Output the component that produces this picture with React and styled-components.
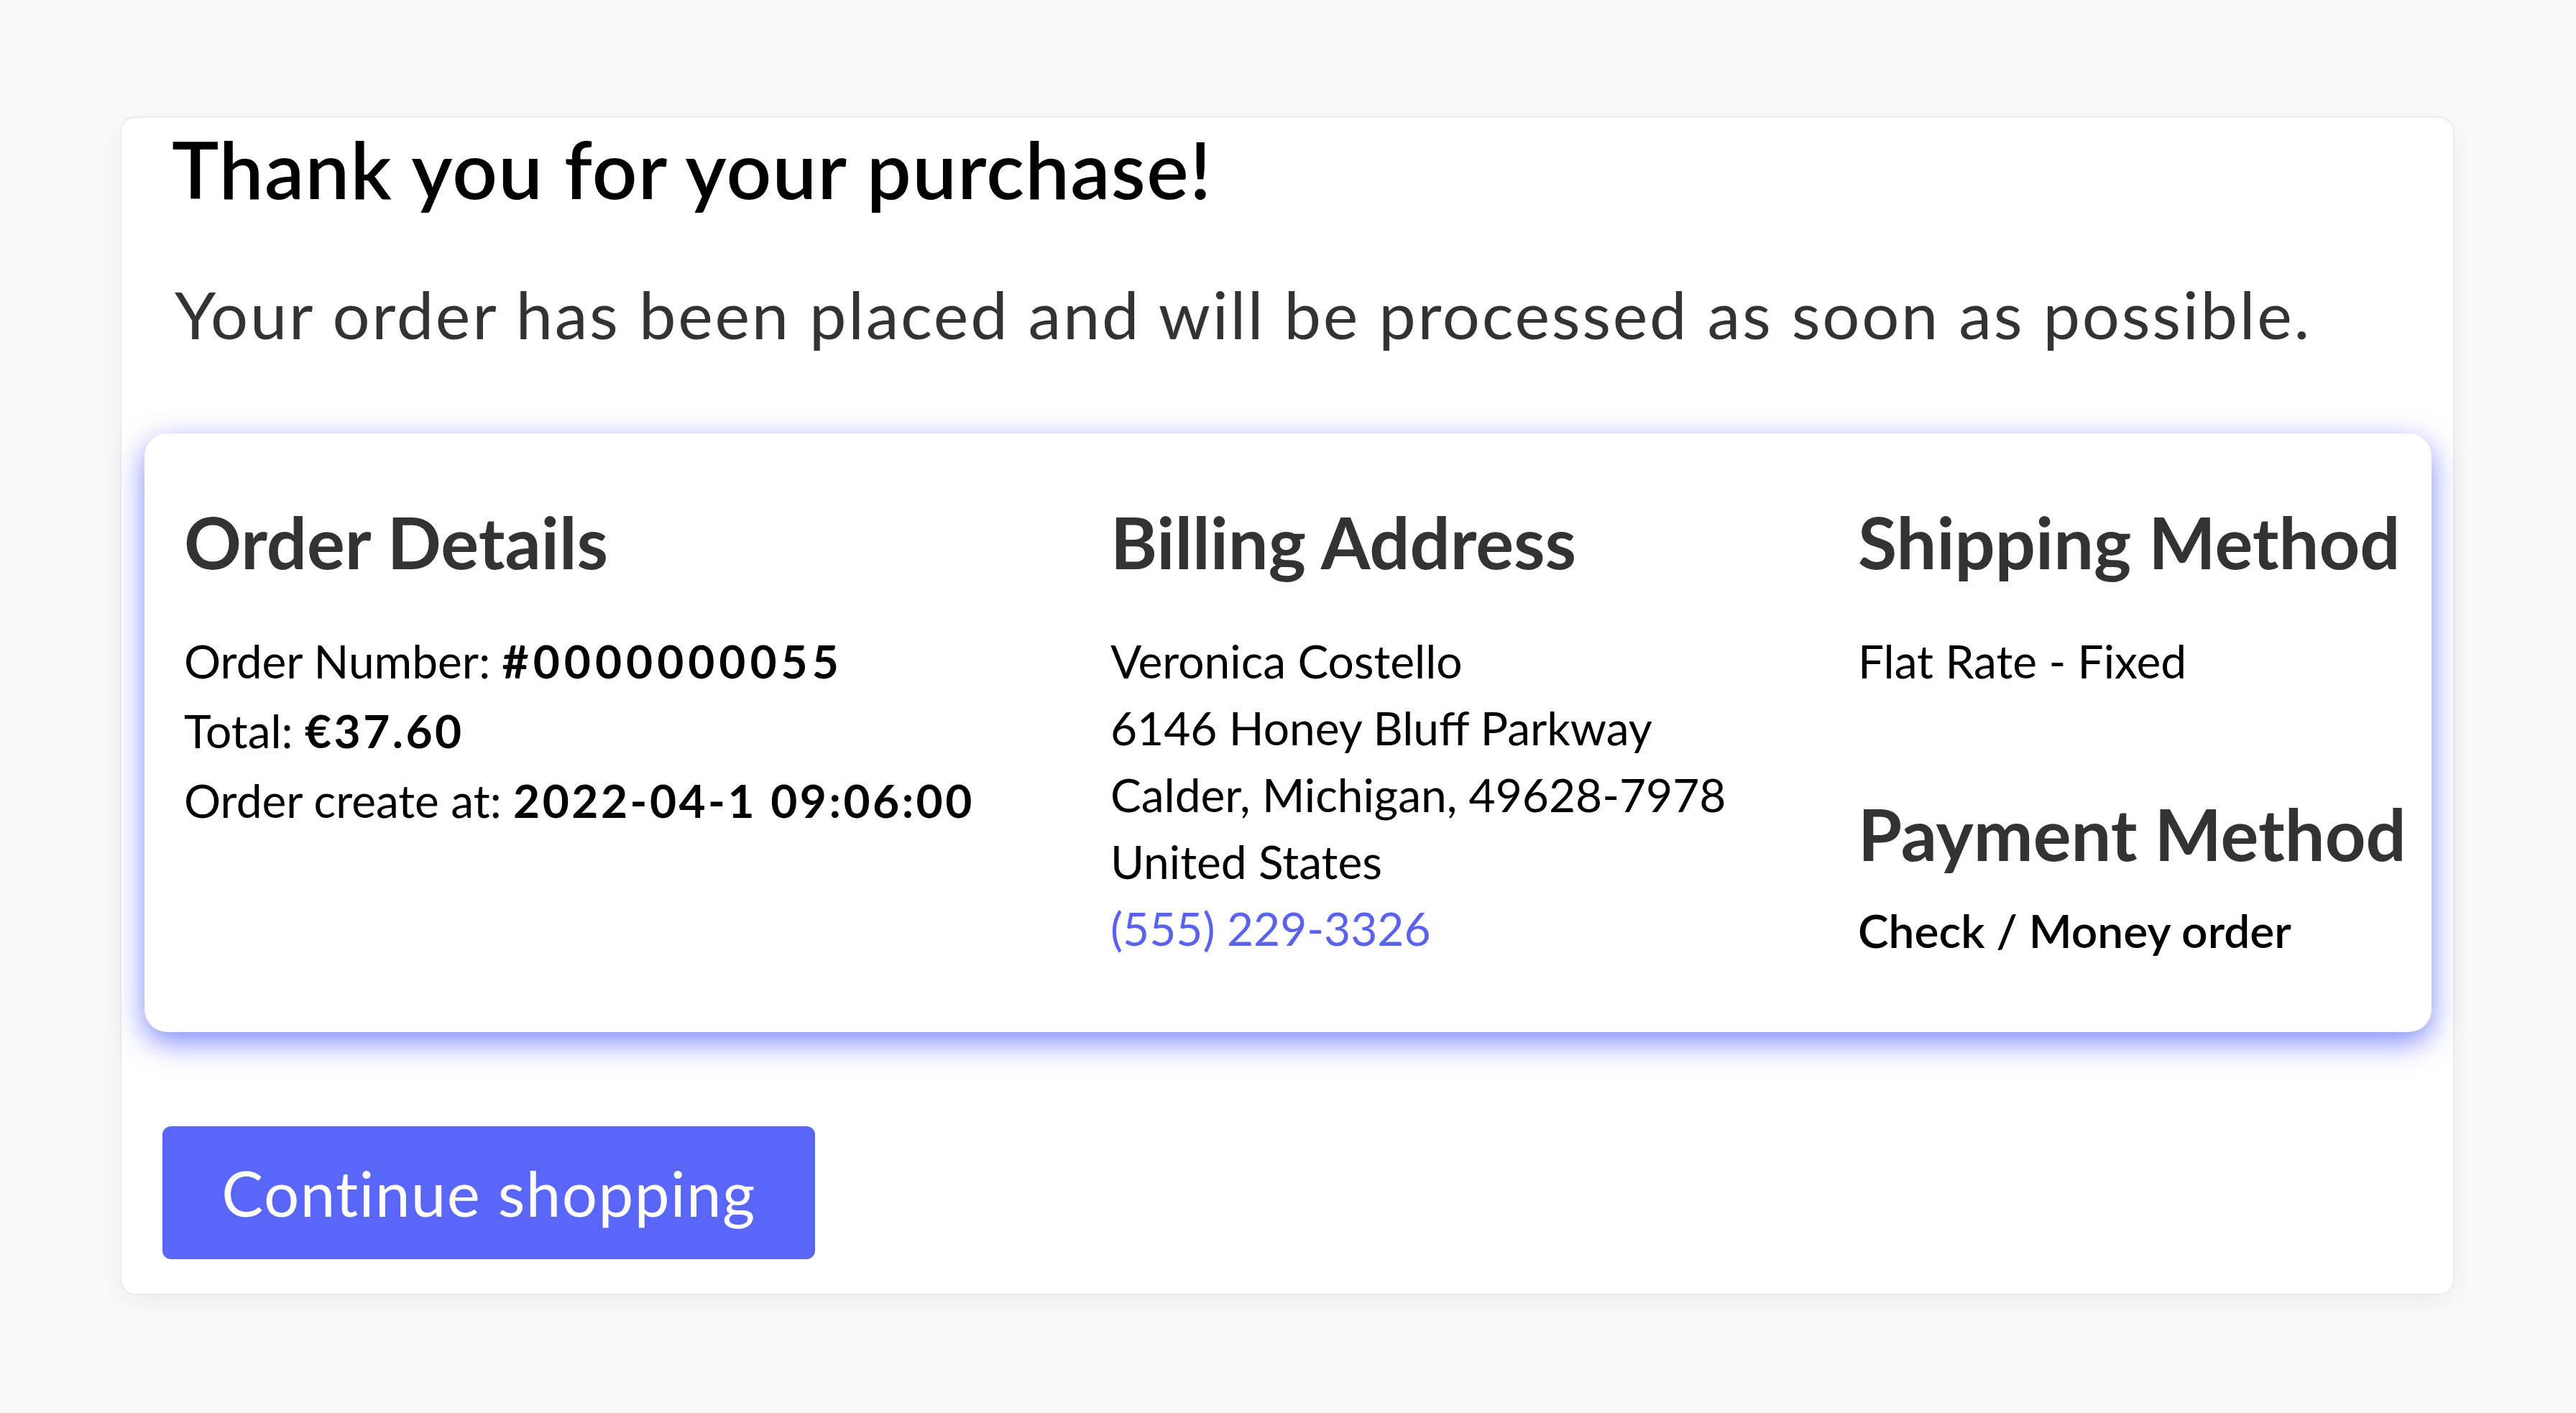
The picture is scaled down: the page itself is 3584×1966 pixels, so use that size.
import React from "react";
import styled, { createGlobalStyle } from "styled-components";

const GlobalStyle = createGlobalStyle`
  html, body {
    margin: 0;
    padding: 0;
    background: #f9f9f9;
  }
  body {
    font-family: "Lato", "Noto Sans", sans-serif;
    color: #000;
  }
  * {
    box-sizing: border-box;
  }
`;

const Page = styled.div`
  min-height: 1966px;
  padding: 162px 169px 0 167px;
`;

const SuccessCard = styled.div`
  background: #fff;
  border: 2px solid #ececec;
  border-radius: 22px;
  box-shadow: 0 10px 30px rgba(0, 0, 0, 0.05);
  padding: 4px 0 48px;
`;

const Title = styled.h1`
  margin: 0 0 0 70px;
  font-size: 110px;
  line-height: 1.2;
  font-weight: 600;
  letter-spacing: 1.3px;
  color: #000;
  white-space: nowrap;
`;

const Lead = styled.p`
  margin: 82px 0 0 74px;
  font-size: 92px;
  line-height: 1.2;
  font-weight: 400;
  letter-spacing: 2.7px;
  color: #333;
  white-space: nowrap;
`;

const InfoPanel = styled.div`
  margin: 111px 30px 0 32px;
  padding: 92px 46px 95px 55px;
  background: #fff;
  border-radius: 32px;
  box-shadow: 0 14px 42px rgba(78, 92, 245, 0.72);
  display: grid;
  grid-template-columns: 1289px 1040px 1fr;
`;

const Column = styled.div`
  display: flex;
  flex-direction: column;
`;

const SectionTitle = styled.h2`
  margin: ${(p) => p.$top || 0}px 0 0;
  font-size: 99px;
  line-height: 1.2;
  font-weight: 700;
  color: #333;
  white-space: nowrap;
`;

const Lines = styled.div`
  margin-top: ${(p) => p.$top}px;
  display: flex;
  flex-direction: column;
`;

const Line = styled.div`
  font-size: 64px;
  line-height: ${(p) => p.$lh || 93}px;
  font-weight: ${(p) => (p.$strong ? 600 : 400)};
  color: ${(p) => (p.$link ? "#5b63ee" : "#000")};
  white-space: nowrap;

  b {
    font-weight: 700;
    letter-spacing: ${(p) => p.$wide || 3.5}px;
  }
`;

const ContinueButton = styled.button`
  margin: 131px 0 0 57px;
  width: 908px;
  height: 185px;
  border: none;
  border-radius: 12px;
  background: #5a66f8;
  color: #fff;
  font-family: "Lato", "Noto Sans", sans-serif;
  font-size: 87px;
  letter-spacing: 1.4px;
  font-weight: 400;
  cursor: pointer;
  display: flex;
  align-items: center;
  justify-content: center;
`;

export default function App() {
  return (
    <>
      <GlobalStyle />
      <Page>
        <SuccessCard>
          <Title>Thank you for your purchase!</Title>
          <Lead>Your order has been placed and will be processed as soon as possible.</Lead>

          <InfoPanel>
            <Column>
              <SectionTitle>Order Details</SectionTitle>
              <Lines $top={57}>
                <Line $lh={97} $wide={6}>
                  Order Number: <b>#0000000055</b>
                </Line>
                <Line $lh={97}>
                  Total: <b>€37.60</b>
                </Line>
                <Line $lh={97}>
                  Order create at: <b>2022-04-1 09:06:00</b>
                </Line>
              </Lines>
            </Column>

            <Column>
              <SectionTitle>Billing Address</SectionTitle>
              <Lines $top={59}>
                <Line>Veronica Costello</Line>
                <Line>6146 Honey Bluff Parkway</Line>
                <Line>Calder, Michigan, 49628-7978</Line>
                <Line>United States</Line>
                <Line $link>(555) 229-3326</Line>
              </Lines>
            </Column>

            <Column>
              <SectionTitle>Shipping Method</SectionTitle>
              <Lines $top={59}>
                <Line>Flat Rate - Fixed</Line>
              </Lines>
              <SectionTitle $top={135}>Payment Method</SectionTitle>
              <Lines $top={28}>
                <Line $strong>Check / Money order</Line>
              </Lines>
            </Column>
          </InfoPanel>

          <ContinueButton>Continue shopping</ContinueButton>
        </SuccessCard>
      </Page>
    </>
  );
}
